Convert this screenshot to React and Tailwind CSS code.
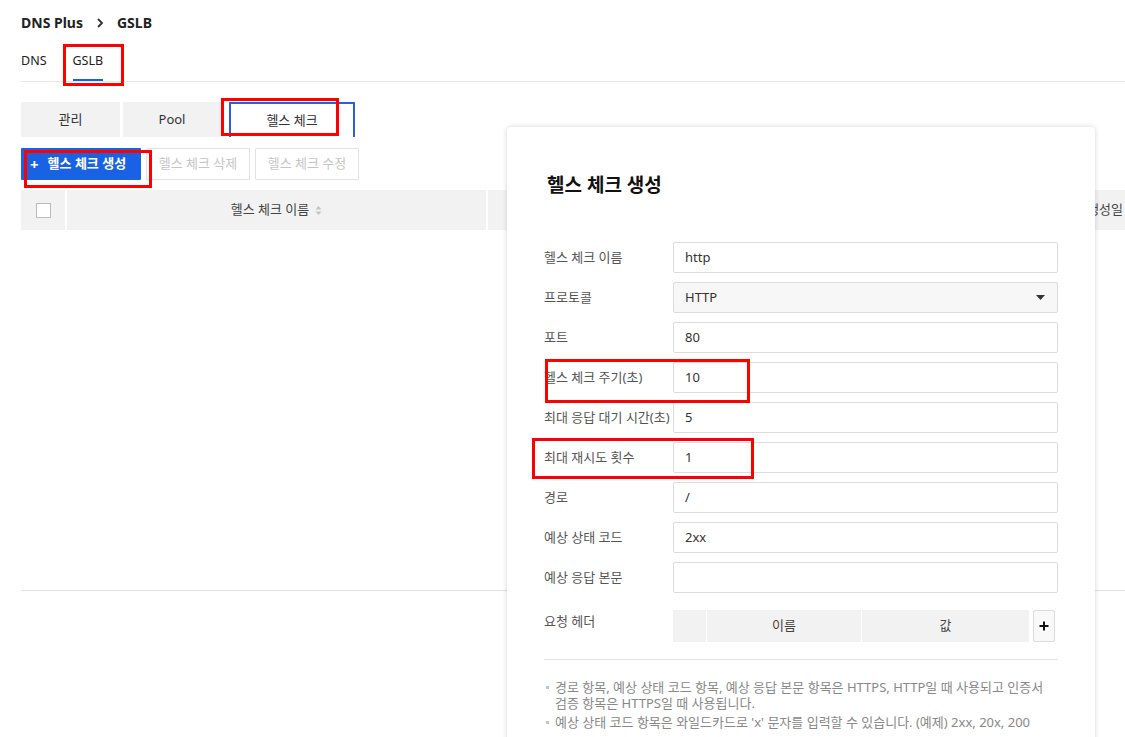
import React from "react";

const fields = [
  { label: "헬스 체크 이름", value: "http" },
  { label: "프로토콜", value: "HTTP", select: true },
  { label: "포트", value: "80" },
  { label: "헬스 체크 주기(초)", value: "10" },
  { label: "최대 응답 대기 시간(초)", value: "5" },
  { label: "최대 재시도 횟수", value: "1" },
  { label: "경로", value: "/" },
  { label: "예상 상태 코드", value: "2xx" },
  { label: "예상 응답 본문", value: "" },
];

function SortIcon() {
  return (
    <svg width="7" height="11" viewBox="0 0 7 11" className="ml-[6px]">
      <path d="M3.5 1 L6.5 4.5 H0.5 Z" fill="#c4c4c4" />
      <path d="M3.5 10 L6.5 6.5 H0.5 Z" fill="#c4c4c4" />
    </svg>
  );
}

function Field({ label, value, select }) {
  return (
    <div className="flex items-center h-[31px]">
      <div className="w-[129px] shrink-0 text-[13px] text-[#555] whitespace-nowrap">{label}</div>
      <div
        className={`flex-1 h-[31px] flex items-center justify-between pl-[11px] pr-[12px] border border-[#dcdcdc] rounded-[2px] text-[13px] text-[#333] ${
          select ? "bg-[#f7f7f7]" : "bg-white"
        }`}
      >
        <span>{value}</span>
        {select && (
          <svg width="9" height="5" viewBox="0 0 9 5">
            <path d="M0 0 H9 L4.5 5 Z" fill="#333" />
          </svg>
        )}
      </div>
    </div>
  );
}

function Note({ children }) {
  return (
    <div className="flex">
      <span className="w-[11px] shrink-0 h-[16px] flex items-center">
        <span className="ml-[2px] w-[3px] h-[3px] bg-[#c4c4c4]" />
      </span>
      <span>{children}</span>
    </div>
  );
}

function Mark({ className }) {
  return <div className={`absolute border-[3px] border-[#ff0000] pointer-events-none ${className}`} />;
}

export default function App() {
  return (
    <div
      className="relative w-[1125px] h-[737px] overflow-hidden bg-white text-[#222]"
      style={{ fontFamily: '"Noto Sans", "Noto Sans CJK KR", sans-serif' }}
    >
      <div className="pl-[21px]">
        {/* breadcrumb */}
        <div className="pt-[13px] h-[41px] flex items-start text-[14px] font-bold text-[#222]">
          <span className="leading-[20px]">DNS Plus</span>
          <svg width="8" height="10" viewBox="0 0 8 10" className="mx-[13px] mt-[5px]">
            <path d="M2 1 L6 5 L2 9" fill="none" stroke="#333" strokeWidth="1.8" />
          </svg>
          <span className="leading-[20px]">GSLB</span>
        </div>

        {/* service tabs */}
        <div className="flex h-[41px] border-b border-[#e8e8e8] text-[12.5px] text-[#222] gap-[26px]">
          <div className="h-[40px] flex items-center">DNS</div>
          <div className="h-[40px] flex items-center relative">
            GSLB
            <div className="absolute left-0 right-0 bottom-0 h-[2px] bg-[#1a62e4]" />
          </div>
        </div>

        {/* section tabs */}
        <div className="mt-[20px] flex h-[35px] text-[13px] text-[#333]">
          <div className="w-[99px] bg-[#f2f2f2] flex items-center justify-center">관리</div>
          <div className="ml-[3px] w-[98px] bg-[#f2f2f2] flex items-center justify-center">Pool</div>
          <div className="ml-[8px] w-[126px] border-t-2 border-x-2 border-[#2a5fe0] bg-white flex items-center justify-center">
            헬스 체크
          </div>
        </div>

        {/* toolbar */}
        <div className="mt-[11px] flex h-[32px] gap-[5px] text-[13px]">
          <div className="w-[120px] bg-[#1a62e4] text-white font-bold flex items-center pl-[9px] rounded-[1px]">
            <span className="text-[15px] mr-[9px] leading-none">+</span>헬스 체크 생성
          </div>
          <div className="w-[104px] border border-[#e2e2e2] text-[#c6c6c6] flex items-center justify-center rounded-[1px]">
            헬스 체크 삭제
          </div>
          <div className="w-[104px] border border-[#e2e2e2] text-[#c6c6c6] flex items-center justify-center rounded-[1px]">
            헬스 체크 수정
          </div>
        </div>

        {/* list table */}
        <div className="mt-[10px] h-[40px] bg-[#f2f2f2] flex text-[13px] text-[#444]">
          <div className="w-[46px] flex items-center justify-center border-r-2 border-white">
            <div className="w-[15px] h-[15px] bg-white border border-[#bbb]" />
          </div>
          <div className="w-[421px] flex items-center justify-center border-r-2 border-white">
            헬스 체크 이름
            <SortIcon />
          </div>
          <div className="flex-1 flex items-center justify-end pr-[2px]">생성일</div>
        </div>
        <div className="h-[361px] border-b border-[#e0e0e0]" />
      </div>

      {/* create dialog */}
      <div className="absolute left-[507px] top-[127px] w-[588px] h-[640px] bg-white rounded-[4px] shadow-[0_0_5px_rgba(0,0,0,0.18)] pl-[37px] pr-[37px] pt-[44px]">
        <div className="ml-[3px] text-[19px] font-bold leading-[28px] text-[#111]">헬스 체크 생성</div>

        <div className="mt-[42px] pt-[1px] flex flex-col gap-[9px]">
          {fields.map((f) => (
            <Field key={f.label} {...f} />
          ))}
        </div>

        <div className="mt-[17px] flex">
          <div className="w-[129px] shrink-0 text-[13px] text-[#555] pt-[2px]">요청 헤더</div>
          <div className="flex h-[32px] w-[356px] bg-[#f2f2f2] text-[13px] text-[#444]">
            <div className="w-[34px] border-r border-white" />
            <div className="w-[155px] border-r border-white flex items-center justify-center">이름</div>
            <div className="flex-1 flex items-center justify-center">값</div>
          </div>
          <div className="ml-[4px] w-[22px] h-[32px] border border-[#dcdcdc] bg-[#f9f9f9] rounded-[2px] flex items-center justify-center">
            <svg width="10" height="10" viewBox="0 0 10 10">
              <path d="M5 0.5 V9.5 M0.5 5 H9.5" stroke="#111" strokeWidth="2" />
            </svg>
          </div>
        </div>

        <div className="mt-[17px] border-t border-[#e2e2e2]" />

        <div className="mt-[19px] flex flex-col gap-[3px] text-[13px] leading-[16px] text-[#888]">
          <Note>
            경로 항목, 예상 상태 코드 항목, 예상 응답 본문 항목은 HTTPS, HTTP일 때 사용되고 인증서
            <br />
            검증 항목은 HTTPS일 때 사용됩니다.
          </Note>
          <Note>예상 상태 코드 항목은 와일드카드로 'x' 문자를 입력할 수 있습니다. (예제) 2xx, 20x, 200</Note>
        </div>
      </div>

      {/* highlight marks */}
      <Mark className="left-[63px] top-[44px] w-[61px] h-[42px]" />
      <Mark className="left-[221px] top-[98px] w-[118px] h-[38px]" />
      <Mark className="left-[24px] top-[150px] w-[128px] h-[38px]" />
      <Mark className="left-[545px] top-[359px] w-[205px] h-[44px]" />
      <Mark className="left-[532px] top-[438px] w-[222px] h-[41px]" />
    </div>
  );
}
